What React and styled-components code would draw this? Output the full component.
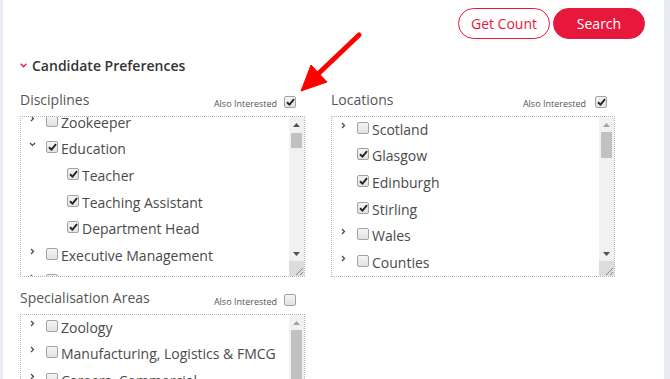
import styled, { createGlobalStyle } from 'styled-components'

const GlobalStyle = createGlobalStyle`
    body {
        margin: 0;
        background: #e9ebf5;
        font-family: "Open Sans", "Liberation Sans", sans-serif;
    }
`

const Page = styled.div`
    position: relative;
    box-sizing: border-box;
    margin: 0 6px 0 3px;
    height: 379px;
    padding: 8px 19px 0 17px;
    background: #fff;
    overflow: hidden;
`

const Toolbar = styled.div`
    display: flex;
    justify-content: flex-end;
    gap: 3px;
`

const Button = styled.button`
    box-sizing: border-box;
    width: 92px;
    height: 31px;
    border-radius: 16px;
    border: 1px solid #e8173c;
    font-family: inherit;
    font-size: 14px;
    cursor: pointer;
    background: ${({ $primary }) => ($primary ? '#e8173c' : '#fff')};
    color: ${({ $primary }) => ($primary ? '#fff' : '#e8173c')};
`

const Heading = styled.div`
    display: flex;
    align-items: center;
    gap: 5px;
    margin-top: 16px;
    height: 20px;
    font-size: 14px;
    font-weight: 600;
    color: #333;
`

const Columns = styled.div`
    display: grid;
    grid-template-columns: 285px 284px;
    column-gap: 26px;
    row-gap: 11px;
    margin-top: 15px;
`

const Field = styled.div`
    display: flex;
    flex-direction: column;
    gap: 6px;
`

const LabelRow = styled.div`
    display: flex;
    justify-content: space-between;
    align-items: flex-end;
    height: 20px;
`

const Label = styled.div`
    font-size: 14px;
    line-height: 20px;
    color: #555;
`

const Interested = styled.div`
    display: flex;
    align-items: center;
    gap: ${({ $gap }) => $gap}px;
    padding-right: ${({ $pad }) => $pad}px;
    font-size: 9px;
    color: #555;
`

const Box = styled.div`
    display: flex;
    height: 161px;
    box-sizing: border-box;
    border: 1px dotted #b5b5b5;
`

const List = styled.div`
    flex: 1;
    overflow: hidden;
`

const Inner = styled.div`
    margin-top: ${({ $scroll }) => -$scroll}px;
`

const Row = styled.div`
    box-sizing: border-box;
    display: flex;
    align-items: center;
    height: 26.6px;
    padding: 0 0 2px ${({ $depth }) => 8 + $depth * 21}px;
    font-size: 14px;
    color: #4a4a4a;
    white-space: nowrap;
`

const Toggle = styled.span`
    display: flex;
    justify-content: flex-start;
    width: 17px;
    margin-top: -8px;
`

const Check = styled.span`
    box-sizing: border-box;
    display: flex;
    align-items: center;
    justify-content: center;
    width: 12px;
    height: 12px;
    margin: -3px 3px 0 0;
    flex-shrink: 0;
    border: 1px solid #a3a3a3;
    border-radius: 2px;
    background: linear-gradient(#f4f4f4, #e2e2e2);
`

const Scrollbar = styled.div`
    display: flex;
    flex-direction: column;
    width: 15px;
    background: #f1f1f1;
`

const ArrowButton = styled.div`
    display: flex;
    align-items: center;
    justify-content: center;
    height: 15px;
    flex-shrink: 0;
`

const Track = styled.div`
    flex: 1;
    padding: 0 2px;
`

const Thumb = styled.div`
    margin-top: ${({ $top }) => $top}px;
    height: ${({ $size }) => $size}px;
    background: #c1c1c1;
`

const Resizer = styled.div`
    height: 15px;
    flex-shrink: 0;
    background: #dcdcdc;
    display: flex;
    align-items: flex-end;
    justify-content: flex-end;
`

const Overlay = styled.svg`
    position: absolute;
    left: -3px;
    top: 0;
    pointer-events: none;
`

const Chevron = ({ open }) => (
    <svg width="7" height="7" viewBox="0 0 7 7">
        <path
            d={open ? 'M1 2 L3.5 4.5 L6 2' : 'M2 1 L4.5 3.5 L2 6'}
            fill="none"
            stroke="#444"
            strokeWidth="1.2"
        />
    </svg>
)

const CheckBox = ({ checked }) => (
    <Check>
        {checked && (
            <svg width="9" height="8" viewBox="0 0 9 8">
                <path d="M1 4.2 L3.5 6.6 L8 1.2" fill="none" stroke="#222" strokeWidth="1.9" />
            </svg>
        )}
    </Check>
)

const Triangle = ({ down, dim }) => (
    <svg width="7" height="4" viewBox="0 0 7 4">
        <path d={down ? 'M0 0 H7 L3.5 4 Z' : 'M0 4 H7 L3.5 0 Z'} fill={dim ? '#a3a3a3' : '#505050'} />
    </svg>
)

const Field$ = ({ label, interested, gap, pad, items, scroll, thumb }) => (
    <Field>
        <LabelRow>
            <Label>{label}</Label>
            <Interested $gap={gap} $pad={pad}>
                Also Interested
                <CheckBox checked={interested} />
            </Interested>
        </LabelRow>
        <Box>
            <List>
                <Inner $scroll={scroll}>
                    {items.map((item) => (
                        <Row key={item.title} $depth={item.depth || 0}>
                            <Toggle>{item.toggle && <Chevron open={item.toggle === 'open'} />}</Toggle>
                            <CheckBox checked={item.checked} />
                            {item.title}
                        </Row>
                    ))}
                </Inner>
            </List>
            <Scrollbar>
                <ArrowButton>
                    <Triangle dim={scroll === 0} />
                </ArrowButton>
                <Track>
                    <Thumb $top={thumb.top} $size={thumb.size} />
                </Track>
                <ArrowButton>
                    <Triangle down />
                </ArrowButton>
                <Resizer>
                    <svg width="10" height="10" viewBox="0 0 10 10">
                        <path d="M9 2 L2 9 M9 6 L6 9" stroke="#8a8a8a" strokeWidth="1" />
                    </svg>
                </Resizer>
            </Scrollbar>
        </Box>
    </Field>
)

const disciplines = [
    { title: 'Zookeeper', toggle: 'closed' },
    { title: 'Education', toggle: 'open', checked: true },
    { title: 'Teacher', depth: 1, checked: true },
    { title: 'Teaching Assistant', depth: 1, checked: true },
    { title: 'Department Head', depth: 1, checked: true },
    { title: 'Executive Management', toggle: 'closed' },
    { title: 'Business Support Office', toggle: 'closed' },
]

const locations = [
    { title: 'Scotland', toggle: 'closed' },
    { title: 'Glasgow', checked: true },
    { title: 'Edinburgh', checked: true },
    { title: 'Stirling', checked: true },
    { title: 'Wales', toggle: 'closed' },
    { title: 'Counties', toggle: 'closed' },
]

const areas = [
    { title: 'Zoology', toggle: 'closed' },
    { title: 'Manufacturing, Logistics & FMCG', toggle: 'closed' },
    { title: 'Careers, Commercial', toggle: 'closed' },
]

export default function App() {
    return (
        <>
            <GlobalStyle />
            <Page>
                <Toolbar>
                    <Button>Get Count</Button>
                    <Button $primary>Search</Button>
                </Toolbar>
                <Heading>
                    <svg width="7" height="5" viewBox="0 0 7 5">
                        <path d="M0.7 0.8 L3.5 3.8 L6.3 0.8" fill="none" stroke="#e8173c" strokeWidth="1.3" />
                    </svg>
                    Candidate Preferences
                </Heading>
                <Columns>
                    <Field$
                        label="Disciplines"
                        interested
                        gap={7}
                        pad={6}
                        items={disciplines}
                        scroll={7}
                        thumb={{ top: 1, size: 15 }}
                    />
                    <Field$
                        label="Locations"
                        interested
                        gap={9}
                        pad={5}
                        items={locations}
                        scroll={0}
                        thumb={{ top: 0, size: 26 }}
                    />
                    <Field$
                        label="Specialisation Areas"
                        gap={7}
                        pad={6}
                        items={areas}
                        scroll={0}
                        thumb={{ top: 0, size: 120 }}
                    />
                </Columns>
                <Overlay width="670" height="379" viewBox="0 0 670 379">
                    <line x1="359" y1="35" x2="318" y2="74" stroke="#ff0000" strokeWidth="5" strokeLinecap="round" />
                    <path d="M301 91 L311 65 L327 82 Z" fill="#ff0000" stroke="#ff0000" strokeLinejoin="round" />
                </Overlay>
            </Page>
        </>
    )
}
